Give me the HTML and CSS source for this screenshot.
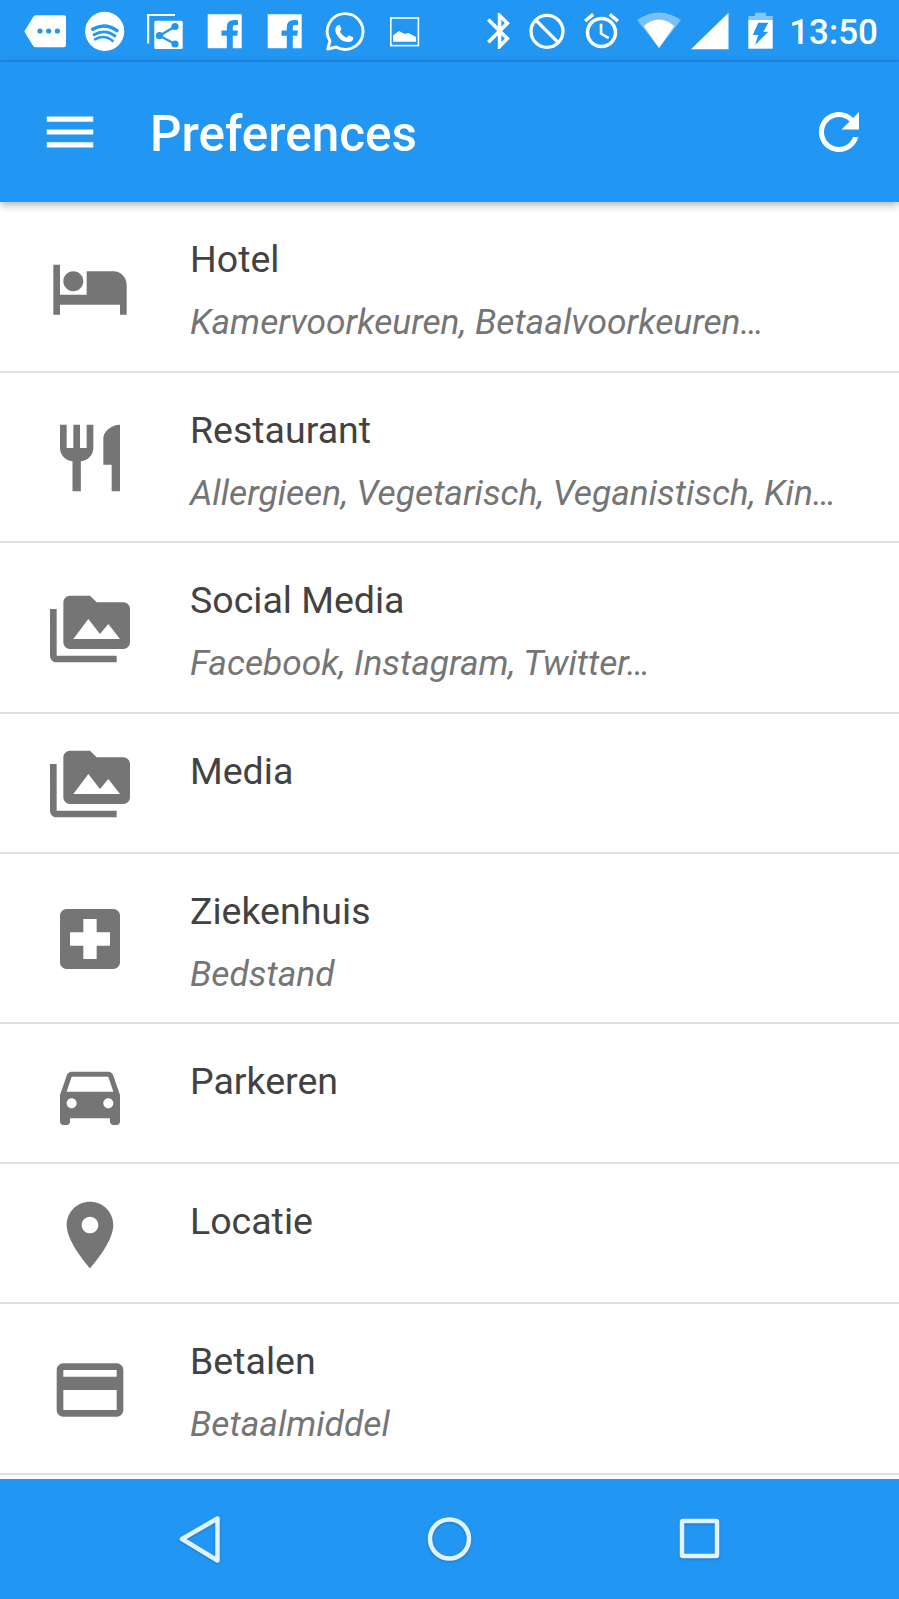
FILE: index.html
```html
<!DOCTYPE html>
<html lang="nl">
<head>
<meta charset="utf-8">
<title>Preferences</title>
<link rel="stylesheet" href="styles.css">
</head>
<body>
<div class="screen">
  <header class="status">
    <div class="status-left">
      <svg class="sicon" viewBox="15 0 60 60"><path fill="#fff" d="M24.3 31.5 33 17.2Q34 15.3 36 15.3H64Q66 15.3 66 17.3V45.3Q66 47.3 64 47.3H36Q34 47.3 33 45.8Z"/><g fill="#2196f3"><circle cx="40" cy="31" r="2.6"/><circle cx="48.7" cy="31" r="2.6"/><circle cx="57.4" cy="31" r="2.6"/></g></svg>
      <svg class="sicon" viewBox="75 0 60 60"><circle cx="104.7" cy="31.3" r="19.6" fill="#fff"/><g fill="none" stroke="#2196f3" stroke-linecap="round"><path stroke-width="3.4" d="M92.7 29.3Q105 22 117 30.7"/><path stroke-width="2.9" d="M94 34.7Q105 28.5 115 36"/><path stroke-width="2.5" d="M95 39.3Q105 34 112.7 41"/></g></svg>
      <svg class="sicon" viewBox="135 0 60 60"><path fill="none" stroke="#fff" stroke-width="2.2" d="M175 15H148.100V43.500"/><rect x="154.300" y="20.700" width="28.400" height="28.300" rx="1.500" fill="#fff"/><g fill="#2196f3"><circle cx="175" cy="26.500" r="3.600"/><circle cx="159.500" cy="35.700" r="3.600"/><circle cx="175" cy="44" r="3.600"/></g><path fill="none" stroke="#2196f3" stroke-width="2.300" d="M175 26.500 159.500 35.700 175 44"/></svg>
      <svg class="sicon" viewBox="195 0 60 60"><path fill="#fff" d="M207.700 14.300H241.700V48.300H232.800V35.800H237.200L237.900 30.500H232.800V27.300Q232.800 25 235.300 25H238V20.300Q236.500 20 234.300 20 226.800 20 226.800 27.100V30.500H221.500V35.800H226.800V48.300H207.700Z"/></svg>
      <svg class="sicon" viewBox="195 0 60 60"><path fill="#fff" d="M207.700 14.300H241.700V48.300H232.800V35.800H237.200L237.900 30.500H232.800V27.300Q232.800 25 235.300 25H238V20.300Q236.500 20 234.300 20 226.800 20 226.800 27.100V30.500H221.500V35.800H226.800V48.300H207.700Z"/></svg>
      <svg class="sicon" viewBox="315 0 60 60"><path fill="none" stroke="#fff" stroke-width="2.900" stroke-linejoin="round" d="M345 13.600A17.900 17.900 0 1 1 336.200 47L327.700 49 330 41A17.900 17.900 0 0 1 345 13.600Z"/><path fill="#fff" d="M339.600 24.800 341.500 29.300 339.900 31.700Q342 35.600 346.500 37.700L348.900 35.300 353.400 37.500Q353.200 41.800 349 42Q343 42.200 338.700 37.400 334.800 33.200 335.500 28.500 336 25.300 339.600 24.800Z"/></svg>
      <svg class="sicon" viewBox="375 0 60 60"><rect x="390.800" y="18" width="27.600" height="27.600" fill="none" stroke="#fff" stroke-width="1.600"/><path fill="#fff" d="M393 41.800V35.500L399 31 404.500 34 408.300 33 416 37V41.800Z"/></svg>
    </div>
    <div class="status-right">
      <svg class="ricon" width="23" height="60" viewBox="487 0 23 60"><path fill="#fff" transform="translate(478 9.300) scale(1.800)" d="M17.710 7.710L12 2h-1v7.590L6.410 5 5 6.410 10.590 12 5 17.590 6.410 19 11 14.410V22h1l5.710-5.710-4.300-4.290 4.300-4.290zM13 5.830l1.880 1.880L13 9.590V5.830zm1.880 10.460L13 18.170v-3.760l1.880 1.880z"/></svg>
      <svg class="ricon" width="36" height="60" viewBox="529 0 36 60"><circle cx="547" cy="31.300" r="16" fill="none" stroke="#fff" stroke-width="3.300"/><path stroke="#fff" stroke-width="3.300" d="M535.700 20 558.300 42.600"/></svg>
      <svg class="ricon" width="36" height="60" viewBox="584 0 36 60"><path fill="#fff" transform="translate(580.500 9.700) scale(1.750)" d="M22 5.720l-4.600-3.860-1.290 1.530 4.600 3.860L22 5.720zM7.880 3.390L6.600 1.860 2 5.710l1.290 1.530 4.590-3.850zM12.500 8H11v6l4.750 2.850.75-1.230-4-2.370V8zM12 4c-4.970 0-9 4.030-9 9s4.030 9 9 9 9-4.030 9-9-4.030-9-9-9zm0 16c-3.870 0-7-3.130-7-7s3.130-7 7-7 7 3.130 7 7-3.130 7-7 7z"/></svg>
      <svg class="ricon ricon-wifi" width="44" height="60" viewBox="636 0 44 60"><path fill="#fff" fill-opacity=".4" d="M636 20Q658 5 680 20L658 48Z"/><path fill="#fff" d="M642.700 26Q658 13 673.300 26L658 48Z"/></svg>
      <svg class="ricon ricon-signal" width="38" height="60" viewBox="690 0 38 60"><path fill="#fff" d="M690 49.300 727.500 12.700V49.300Z"/></svg>
      <svg class="ricon" width="25" height="60" viewBox="748 0 25 60"><path fill="#fff" fill-opacity=".45" d="M755 12.700H766V16H772.700V20H748.300V16H755Z"/><path fill="#fff" d="M748.300 20H772.700V48.700H748.300Z"/><path fill="#2196f3" d="M758.300 22.700H768.300L763.300 31.700H768.300L755 45 758.300 35H752.700Z"/></svg>
      <span class="time">13:50</span>
    </div>
  </header>
  <nav class="appbar">
    <svg class="menu" viewBox="0 0 24 24"><path fill="#fff" d="M3 18h18v-2H3v2zm0-5h18v-2H3v2zm0-5h18V6H3v2z"/></svg>
    <h1 class="title">Preferences</h1>
    <svg class="refresh" viewBox="0 0 24 24"><path fill="#fff" d="M17.650 6.350C16.200 4.900 14.210 4 12 4c-4.420 0-7.990 3.580-7.990 8s3.570 8 7.990 8c3.730 0 6.840-2.550 7.730-6h-2.080c-.82 2.330-3.040 4-5.650 4-3.310 0-6-2.690-6-6s2.690-6 6-6c1.660 0 3.140.69 4.220 1.780L13 11h7V4l-2.350 2.350z"/></svg>
  </nav>
  <main class="list">
    <div class="row">
      <svg class="icon" viewBox="0 0 24 24"><path d="M7 13c1.660 0 3-1.340 3-3S8.660 7 7 7s-3 1.340-3 3 1.340 3 3 3zm12-6h-8v7H3V5H1v15h2v-3h18v3h2v-9c0-2.210-1.790-4-4-4z"/></svg>
      <div class="text"><div class="name">Hotel</div><div class="sub">Kamervoorkeuren, Betaalvoorkeuren…</div></div>
    </div>
    <div class="row">
      <svg class="icon" viewBox="0 0 24 24"><path d="M11 9H9V2H7v7H5V2H3v7c0 2.120 1.660 3.840 3.750 3.970V22h2.500v-9.030C11.340 12.840 13 11.120 13 9V2h-2v7zm5-3v8h2.500v8H21V2c-2.760 0-5 2.240-5 4z"/></svg>
      <div class="text"><div class="name">Restaurant</div><div class="sub">Allergieen, Vegetarisch, Veganistisch, Kin…</div></div>
    </div>
    <div class="row">
      <svg class="icon" viewBox="0 0 24 24"><path d="M2 6H0v5h.01L0 20c0 1.100.9 2 2 2h18v-2H2V6zm20-2h-8l-2-2H6c-1.100 0-1.990.9-1.990 2L4 16c0 1.100.9 2 2 2h16c1.100 0 2-.9 2-2V6c0-1.100-.9-2-2-2zM7 15l4.500-6 3.500 4.510 2.500-3.010L21 15H7z"/></svg>
      <div class="text"><div class="name">Social Media</div><div class="sub">Facebook, Instagram, Twitter…</div></div>
    </div>
    <div class="row">
      <svg class="icon" viewBox="0 0 24 24"><path d="M2 6H0v5h.01L0 20c0 1.100.9 2 2 2h18v-2H2V6zm20-2h-8l-2-2H6c-1.100 0-1.990.9-1.990 2L4 16c0 1.100.9 2 2 2h16c1.100 0 2-.9 2-2V6c0-1.100-.9-2-2-2zM7 15l4.500-6 3.500 4.510 2.500-3.010L21 15H7z"/></svg>
      <div class="text"><div class="name">Media</div></div>
    </div>
    <div class="row">
      <svg class="icon" viewBox="0 0 24 24"><path d="M19 3H5c-1.100 0-1.990.9-1.990 2L3 19c0 1.100.9 2 2 2h14c1.100 0 2-.9 2-2V5c0-1.100-.9-2-2-2zm-1 11h-4v4h-4v-4H6v-4h4V6h4v4h4v4z"/></svg>
      <div class="text"><div class="name">Ziekenhuis</div><div class="sub">Bedstand</div></div>
    </div>
    <div class="row">
      <svg class="icon" viewBox="0 0 24 24"><path d="M18.920 6.010C18.720 5.420 18.160 5 17.500 5h-11c-.66 0-1.210.42-1.420 1.010L3 12v8c0 .55.45 1 1 1h1c.55 0 1-.45 1-1v-1h12v1c0 .55.45 1 1 1h1c.55 0 1-.45 1-1v-8l-2.080-5.990zM6.500 16c-.83 0-1.500-.67-1.500-1.500S5.670 13 6.500 13s1.500.67 1.500 1.500S7.330 16 6.500 16zm11 0c-.83 0-1.500-.67-1.500-1.500s.67-1.500 1.500-1.500 1.500.67 1.500 1.500-.67 1.500-1.500 1.500zM5 11l1.500-4.500h11L19 11H5z"/></svg>
      <div class="text"><div class="name">Parkeren</div></div>
    </div>
    <div class="row">
      <svg class="icon" viewBox="0 0 24 24"><path d="M12 2C8.130 2 5 5.130 5 9c0 5.250 7 13 7 13s7-7.750 7-13c0-3.870-3.130-7-7-7zm0 9.500c-1.380 0-2.500-1.120-2.500-2.500s1.120-2.500 2.500-2.500 2.500 1.120 2.500 2.500-1.120 2.500-2.500 2.500z"/></svg>
      <div class="text"><div class="name">Locatie</div></div>
    </div>
    <div class="row">
      <svg class="icon" viewBox="0 0 24 24"><path d="M20 4H4c-1.110 0-1.990.89-1.990 2L2 18c0 1.110.89 2 2 2h16c1.110 0 2-.89 2-2V6c0-1.110-.89-2-2-2zm0 14H4v-6h16v6zm0-10H4V6h16v2z"/></svg>
      <div class="text"><div class="name">Betalen</div><div class="sub">Betaalmiddel</div></div>
    </div>
  </main>
  <footer class="navbar">
    <svg class="navicon" viewBox="170 1509 60 60"><path d="M182 1539 217.500 1518.500V1560.500Z"/></svg>
    <svg class="navicon" viewBox="420 1509 60 60"><circle cx="449.500" cy="1539" r="19.500"/></svg>
    <svg class="navicon" viewBox="670 1509 60 60"><rect x="682" y="1521" width="35" height="35" rx="1"/></svg>
  </footer>
</div>
</body>
</html>
```

FILE: styles.css
```css
* { box-sizing: border-box; }
html, body { margin: 0; padding: 0; }
body { background: #fff; font-family: Roboto, "Liberation Sans", sans-serif; }
.screen { display: flex; flex-direction: column; width: 899px; height: 1599px; overflow: hidden; }

.status { flex: none; height: 62px; display: flex; justify-content: space-between; background: #2196f3; border-bottom: 2px solid #1e88e5; }
.status-left { display: flex; padding-left: 15px; }
.sicon { display: block; width: 60px; height: 60px; }
.status-right { display: flex; align-items: center; gap: 19px; padding-right: 21px; height: 60px; }
.ricon { display: block; flex: none; }
.ricon-wifi { margin-left: -2px; }
.ricon-signal { margin-left: -9px; }
.time { margin-left: -3px; padding-top: 6px; color: #fff; font-size: 35px; font-weight: 500; line-height: 54px; }

.appbar { position: relative; z-index: 1; flex: none; height: 140px; display: flex; align-items: center; background: #2196f3; box-shadow: 0 3px 8px rgba(0, 0, 0, .3); }
.menu { display: block; flex: none; width: 62px; height: 62px; margin-left: 39px; }
.title { flex: 1; margin: 4px 0 0 49px; color: #fff; font-size: 49.4px; font-weight: 500; line-height: 60px; }
.refresh { display: block; flex: none; width: 60px; height: 60px; margin-right: 30px; }

.list { flex: 1; min-height: 0; overflow: hidden; }
.row { display: flex; min-height: 140px; padding-left: 50px; border-bottom: 2px solid #e0e0e0; align-items: stretch; }
.icon { display: block; flex: none; align-self: center; width: 80px; height: 80px; margin-top: 3px; fill: #757575; }
.text { flex: 1; min-width: 0; margin-left: 60px; padding: 35px 0 26.5px; white-space: nowrap; }
.name { color: #424242; font-size: 37.5px; line-height: 44px; }
.sub { margin-top: 19px; color: #757575; font-size: 35.3px; font-style: italic; line-height: 44px; }

.navbar { flex: none; height: 120px; margin-top: 3px; display: flex; align-items: center; justify-content: center; gap: 190px; background: #2196f3; }
.navicon { display: block; width: 60px; height: 60px; fill: none; stroke: #e3f2fd; stroke-width: 4.5; stroke-linejoin: round; filter: drop-shadow(0 1px 1px rgba(0, 0, 0, .2)); }
```
